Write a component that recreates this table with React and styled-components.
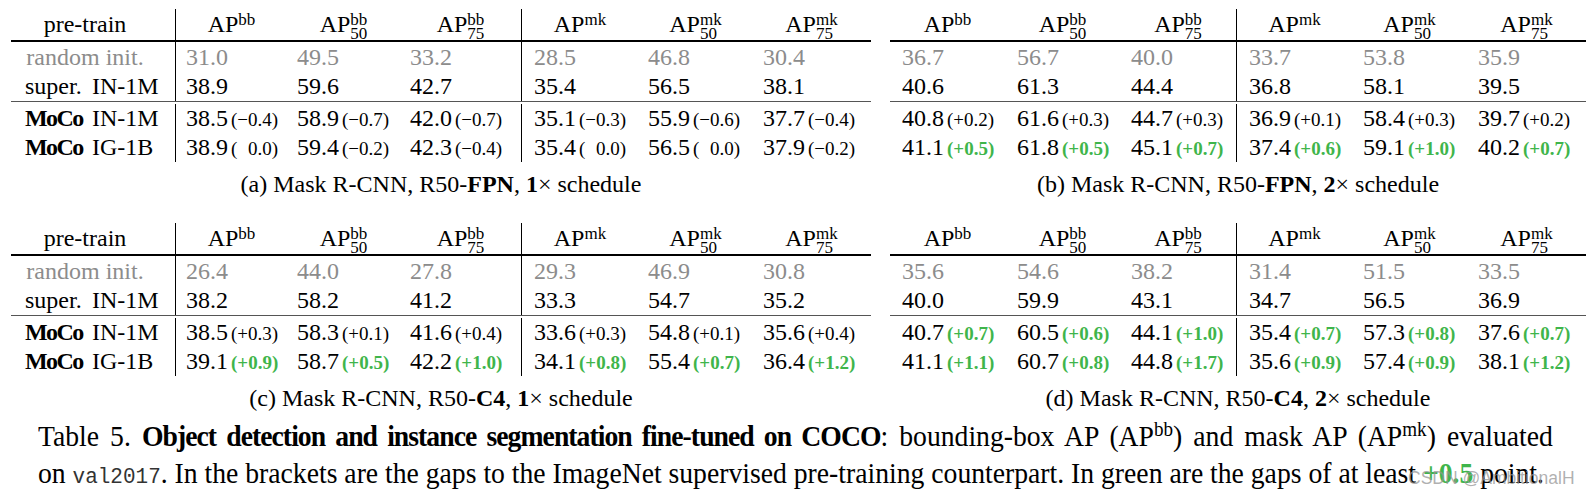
import React from 'react';
import styled, { createGlobalStyle } from 'styled-components';

const GlobalStyle = createGlobalStyle`
  body {
    margin: 0;
    background: #fff;
    color: #000;
    font-family: "Liberation Serif", "Times New Roman", serif;
  }
`;

const GRAY = '#8c8c8c';
const GREEN = '#3fb54b';

// column widths / left padding / vertical rule on the left edge
const COLS_LEFT = [
  { w: 112, pad: 10, sep: true },
  { w: 113, pad: 10 },
  { w: 121, pad: 10 },
  { w: 117, pad: 12, sep: true },
  { w: 115, pad: 10 },
  { w: 117, pad: 10 },
];
const COLS_RIGHT = [
  { w: 115, pad: 12 },
  { w: 115, pad: 12 },
  { w: 116, pad: 11 },
  { w: 116, pad: 12, sep: true },
  { w: 115, pad: 11 },
  { w: 119, pad: 11 },
];

const HEADS = [
  ['bb', null], ['bb', '50'], ['bb', '75'],
  ['mk', null], ['mk', '50'], ['mk', '75'],
];

const TABLES = [
  {
    id: 'a', cols: COLS_LEFT, label: true, arch: 'FPN', sched: '1',
    rows: [
      ['31.0', '49.5', '33.2', '28.5', '46.8', '30.4'],
      ['38.9', '59.6', '42.7', '35.4', '56.5', '38.1'],
      ['38.5 −0.4', '58.9 −0.7', '42.0 −0.7', '35.1 −0.3', '55.9 −0.6', '37.7 −0.4'],
      ['38.9 0.0', '59.4 −0.2', '42.3 −0.4', '35.4 0.0', '56.5 0.0', '37.9 −0.2'],
    ],
  },
  {
    id: 'b', cols: COLS_RIGHT, label: false, arch: 'FPN', sched: '2',
    rows: [
      ['36.7', '56.7', '40.0', '33.7', '53.8', '35.9'],
      ['40.6', '61.3', '44.4', '36.8', '58.1', '39.5'],
      ['40.8 +0.2', '61.6 +0.3', '44.7 +0.3', '36.9 +0.1', '58.4 +0.3', '39.7 +0.2'],
      ['41.1 +0.5g', '61.8 +0.5g', '45.1 +0.7g', '37.4 +0.6g', '59.1 +1.0g', '40.2 +0.7g'],
    ],
  },
  {
    id: 'c', cols: COLS_LEFT, label: true, arch: 'C4', sched: '1',
    rows: [
      ['26.4', '44.0', '27.8', '29.3', '46.9', '30.8'],
      ['38.2', '58.2', '41.2', '33.3', '54.7', '35.2'],
      ['38.5 +0.3', '58.3 +0.1', '41.6 +0.4', '33.6 +0.3', '54.8 +0.1', '35.6 +0.4'],
      ['39.1 +0.9g', '58.7 +0.5g', '42.2 +1.0g', '34.1 +0.8g', '55.4 +0.7g', '36.4 +1.2g'],
    ],
  },
  {
    id: 'd', cols: COLS_RIGHT, label: false, arch: 'C4', sched: '2',
    rows: [
      ['35.6', '54.6', '38.2', '31.4', '51.5', '33.5'],
      ['40.0', '59.9', '43.1', '34.7', '56.5', '36.9'],
      ['40.7 +0.7g', '60.5 +0.6g', '44.1 +1.0g', '35.4 +0.7g', '57.3 +0.8g', '37.6 +0.7g'],
      ['41.1 +1.1g', '60.7 +0.8g', '44.8 +1.7g', '35.6 +0.9g', '57.4 +0.9g', '38.1 +1.2g'],
    ],
  },
];

const LABELS = [
  { kind: 'center', text: 'random init.' },
  { kind: 'split', tag: 'super.', name: 'IN-1M' },
  { kind: 'split', tag: 'MoCo', name: 'IN-1M', bold: true },
  { kind: 'split', tag: 'MoCo', name: 'IG-1B', bold: true },
];

const Page = styled.div`
  position: relative;
  width: 1592px;
  height: 493px;
  overflow: hidden;
  padding-top: 9px;
  box-sizing: border-box;
`;

const Panels = styled.div`
  display: grid;
  grid-template-columns: 860px 696px;
  column-gap: 19px;
  row-gap: 26px;
  padding-left: 11px;
`;

const Panel = styled.div`
  display: flex;
  flex-direction: column;
`;

const Table = styled.div`
  display: flex;
  flex-direction: column;
  font-size: 24px;
`;

const Row = styled.div`
  display: flex;
  box-sizing: border-box;
  height: ${p => p.$h}px;
  line-height: ${p => p.$lh}px;
  padding-top: ${p => p.$pt || 0}px;
  color: ${p => (p.$muted ? GRAY : '#000')};
`;

const Rule = styled.div`
  height: ${p => p.$thick}px;
  background: ${p => (p.$thick > 1 ? '#000' : '#555')};
`;

const Cell = styled.div`
  box-sizing: border-box;
  flex: none;
  width: ${p => p.$w}px;
  padding-left: ${p => (p.$center ? 0 : p.$pad)}px;
  text-align: ${p => (p.$center ? 'center' : 'left')};
  border-left: ${p => (p.$sep ? '1px solid #000' : '0')};
  white-space: nowrap;
`;

const LabelCell = styled.div`
  box-sizing: border-box;
  flex: none;
  width: 164px;
  white-space: nowrap;
  text-align: ${p => (p.$center ? 'center' : 'left')};
  padding: ${p => (p.$center ? '0 16px 0 0' : '0 0 0 14px')};
`;

const Tag = styled.span`
  display: inline-block;
  width: 67px;
  font-weight: ${p => (p.$bold ? 700 : 400)};
  letter-spacing: ${p => (p.$bold ? '-1.6px' : '0')};
`;

const Scripts = styled.span`
  display: inline-flex;
  flex-direction: column;
  vertical-align: 7px;
  font-size: 17px;
  line-height: 14px;
  text-align: left;
`;

const Delta = styled.span`
  margin-left: 3px;
  font-size: 19px;
  color: ${p => (p.$green ? GREEN : '#000')};
  font-weight: ${p => (p.$green ? 700 : 400)};
`;

const Phantom = styled.span`
  visibility: hidden;
`;

const SubCaption = styled.div`
  margin-top: 9px;
  font-size: 24px;
  line-height: 26px;
  text-align: center;
  white-space: nowrap;
`;

// the caption in the reference is rendered slightly tall and narrow
const Caption = styled.div`
  margin: 7px 0 0 38px;
  width: 1588px;
  font-size: 29px;
  line-height: 37px;
  transform: scaleX(0.954);
  transform-origin: left top;
`;

const Line = styled.div`
  white-space: nowrap;
  text-align: ${p => (p.$justify ? 'justify' : 'left')};
  text-align-last: ${p => (p.$justify ? 'justify' : 'left')};
`;

const Strong = styled.b`
  letter-spacing: -1px;
`;

const Sup = styled.sup`
  font-size: 20px;
  line-height: 0;
  vertical-align: 10px;
`;

const Mono = styled.span`
  font-family: "Liberation Mono", "Courier New", monospace;
  font-size: 22px;
  color: #333;
`;

const Green = styled.b`
  color: ${GREEN};
`;

const Watermark = styled.div`
  position: absolute;
  left: 1408px;
  top: 466px;
  font-family: "Liberation Sans", Arial, sans-serif;
  font-size: 17.5px;
  line-height: 24px;
  color: rgba(150, 150, 150, 0.75);
  white-space: nowrap;
`;

function Head({ sup, sub }) {
  return (
    <>
      AP
      <Scripts>
        <span>{sup}</span>
        {sub && <span>{sub}</span>}
      </Scripts>
    </>
  );
}

function Value({ text }) {
  const [v, d] = text.split(' ');
  if (!d) return v;
  const green = d.endsWith('g');
  const num = d.replace('g', '');
  return (
    <>
      {v}
      <Delta $green={green}>
        ({num === '0.0' ? <><Phantom>−</Phantom>0.0</> : num})
      </Delta>
    </>
  );
}

function Label({ row }) {
  const l = LABELS[row];
  if (l.kind === 'center') return <LabelCell $center>{l.text}</LabelCell>;
  return (
    <LabelCell>
      <Tag $bold={l.bold}>{l.tag}</Tag>
      {l.name}
    </LabelCell>
  );
}

const ROW_SHAPE = [
  { h: 30, lh: 30 },
  { h: 29, lh: 29 },
  { h: 30, lh: 28, pt: 2 },
  { h: 30, lh: 30 },
];

function SubTable({ t }) {
  const row = (r, i) => (
    <Row key={i} $h={ROW_SHAPE[i].h} $lh={ROW_SHAPE[i].lh} $pt={ROW_SHAPE[i].pt} $muted={i === 0}>
      {t.label && <Label row={i} />}
      {t.cols.map((c, j) => (
        <Cell key={j} $w={c.w} $pad={c.pad} $sep={c.sep}>
          <Value text={r[j]} />
        </Cell>
      ))}
    </Row>
  );
  return (
    <Panel>
      <Table>
        <Row $h={31} $lh={31}>
          {t.label && <LabelCell $center>pre-train</LabelCell>}
          {t.cols.map((c, j) => (
            <Cell key={j} $w={c.w} $sep={c.sep} $center>
              <Head sup={HEADS[j][0]} sub={HEADS[j][1]} />
            </Cell>
          ))}
        </Row>
        <Rule $thick={2} />
        {t.rows.slice(0, 2).map(row)}
        <Rule $thick={1} />
        {t.rows.slice(2).map((r, i) => row(r, i + 2))}
      </Table>
      <SubCaption>
        ({t.id}) Mask R-CNN, R50-<b>{t.arch}</b>, <b>{t.sched}</b>× schedule
      </SubCaption>
    </Panel>
  );
}

export default function App() {
  return (
    <Page>
      <GlobalStyle />
      <Panels>
        {TABLES.map(t => (
          <SubTable key={t.id} t={t} />
        ))}
      </Panels>
      <Caption>
        <Line $justify>
          Table 5. <Strong>Object detection and instance segmentation fine-tuned on COCO</Strong>: bounding-box AP
          (AP<Sup>bb</Sup>) and mask AP (AP<Sup>mk</Sup>) evaluated
        </Line>
        <Line>
          on <Mono>val2017</Mono>. In the brackets are the gaps to the ImageNet supervised pre-training
          counterpart. In green are the gaps of at least <Green>+0.5</Green> point.
        </Line>
      </Caption>
      <Watermark>CSDN @AmbitionalH</Watermark>
    </Page>
  );
}
